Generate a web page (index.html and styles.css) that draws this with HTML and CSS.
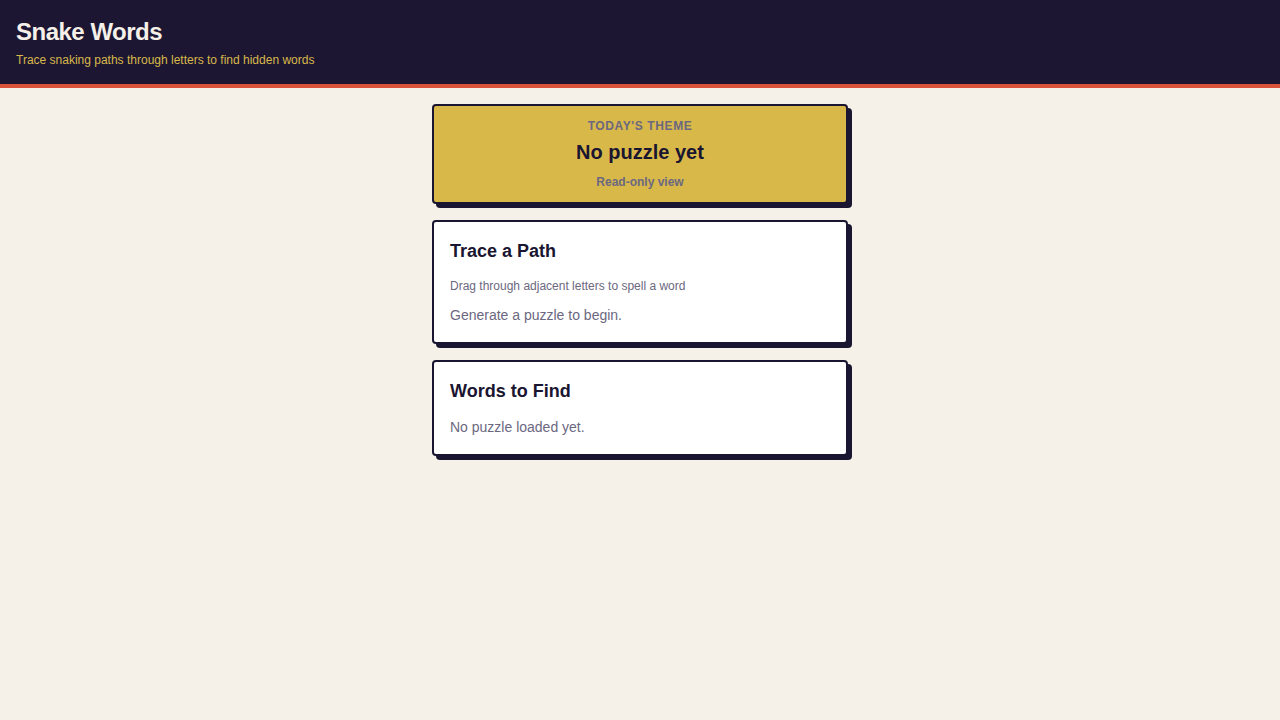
FILE: index.html
```html
<!DOCTYPE html>
<html lang="en">
<head>
    <meta charset="UTF-8">
    <meta name="viewport" content="width=device-width, initial-scale=1.0">
    <title>Snake Words</title>
    <link rel="stylesheet" href="styles.css">
</head>
<body>
    <header class="site-header">
        <h1 class="site-title">Snake Words</h1>
        <p class="site-tagline">Trace snaking paths through letters to find hidden words</p>
    </header>

    <main class="board">
        <section class="card theme-card">
            <div class="theme-label">Today's Theme</div>
            <div class="theme-name">No puzzle yet</div>
            <div class="theme-mode">Read-only view</div>
        </section>

        <section class="card">
            <h2 class="card-title">Trace a Path</h2>
            <p class="hint">Drag through adjacent letters to spell a word</p>
            <p class="muted">Generate a puzzle to begin.</p>
        </section>

        <section class="card">
            <h2 class="card-title">Words to Find</h2>
            <p class="muted">No puzzle loaded yet.</p>
        </section>
    </main>
</body>
</html>
```

FILE: styles.css
```css
/* Base */
body {
    margin: 0;
    background: #f5f0e8;
    color: #1a1530;
    font-family: "Liberation Sans", Arial, sans-serif;
}

/* Header */
.site-header {
    background: #1c1633;
    padding: 17px 16px 15px;
    border-bottom: 4px solid #d9533a;
}

.site-title {
    margin: 0 0 5px;
    font-size: 24px;
    line-height: 29px;
    letter-spacing: -0.5px;
    color: #f5f0e8;
}

.site-tagline {
    margin: 0;
    font-size: 12px;
    line-height: 18px;
    color: #d9b84a;
}

/* Cards */
.board {
    width: 416px;
    margin: 16px auto;
    display: flex;
    flex-direction: column;
    gap: 16px;
}

.card {
    background: #fff;
    border: 2px solid #1a1530;
    border-radius: 4px;
    box-shadow: 4px 4px 0 #1a1530;
    padding: 16px;
}

.card-title {
    margin: 0 0 12px;
    font-size: 18px;
    line-height: 27px;
    color: #1a1530;
}

.hint {
    margin: 0 0 10px;
    font-size: 12px;
    line-height: 18px;
    color: #6b6880;
}

.muted {
    margin: 0;
    font-size: 14px;
    line-height: 21px;
    color: #6b6880;
}

/* Theme banner */
.theme-card {
    background: #d9b84a;
    padding: 12px;
    text-align: center;
}

.theme-label {
    font-size: 12px;
    line-height: 16px;
    font-weight: bold;
    text-transform: uppercase;
    letter-spacing: 0.6px;
    color: #6b6880;
}

.theme-name {
    margin-top: 4px;
    font-size: 20px;
    line-height: 28px;
    font-weight: bold;
    color: #1a1530;
}

.theme-mode {
    margin-top: 8px;
    font-size: 12px;
    line-height: 16px;
    font-weight: bold;
    color: #6b6880;
}
```
